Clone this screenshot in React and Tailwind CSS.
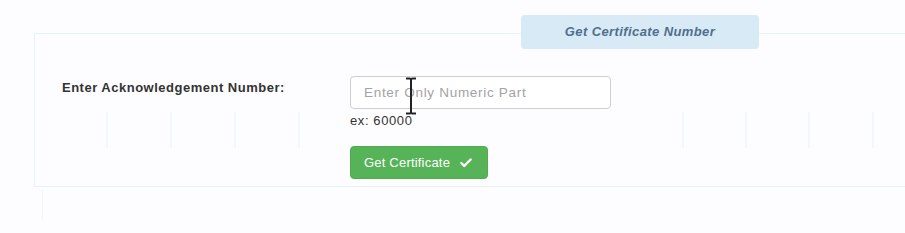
import React from 'react';
import { Check } from 'lucide-react';

// faint guide lines seen behind the form row
const GUIDE_LINES = [106, 170, 234, 298, 682, 745, 808, 872];

export default function App() {
  return (
    <div className="relative w-[905px] h-[233px] overflow-hidden bg-[#fdfdff] font-['Liberation_Sans',Arial,sans-serif] text-[#333]">
      {/* background guide lines */}
      <div className="absolute inset-x-0 top-[112px] h-[36px] pointer-events-none">
        {GUIDE_LINES.map((x) => (
          <div key={x} className="absolute top-0 h-full w-[2px] bg-[#f1f7fe]" style={{ left: x }} />
        ))}
      </div>

      <div className="relative pt-[33px] pl-[34px]">
        <div className="border border-r-0 border-[#e4f3f6] h-[154px]">
          {/* legend tab */}
          <div className="ml-[486px] -mt-[19px] w-[238px] h-[34px] rounded-[4px] bg-[#d9eaf7] flex items-center justify-center">
            <span className="text-[13px] tracking-[0.4px] font-bold italic text-[#4f6f8c]">Get Certificate Number</span>
          </div>

          <div className="flex mt-[27px] pl-[27px]">
            <label className="w-[288px] pt-[2px] text-[13px] tracking-[0.5px] font-bold text-[#333]">
              Enter Acknowledgement Number:
            </label>
            <div className="flex flex-col">
              <input
                type="text"
                placeholder="Enter Only Numeric Part"
                className="w-[261px] h-[33px] rounded-[4px] border border-[#cfcfcf] bg-white px-[13px] text-[13.5px] tracking-[0.7px] placeholder:text-[#a3a3a3] outline-none"
              />
              <span className="mt-[5px] text-[13px] tracking-[0.6px] leading-[14px] text-[#333]">ex: 60000</span>
              <button
                type="button"
                className="mt-[18px] w-[138px] h-[33px] rounded-[4px] border border-[#4cae4c] bg-[#56b357] flex items-center pl-[13px] gap-[9px] text-[13px] tracking-[0.2px] text-white"
              >
                Get Certificate
                <Check className="size-[14px]" strokeWidth={4} />
              </button>
            </div>
          </div>
        </div>
        <div className="ml-[8px] mt-[3px] h-[30px] border-l border-[#eef7fa]" />
      </div>

      {/* text cursor (I-beam) over the input */}
      <svg className="absolute left-[404px] top-[77px] pointer-events-none" width="14" height="38" viewBox="0 0 14 38">
        <path d="M2 1.5h3.5c.8 0 1.5.7 1.5 1.5 0-.8.7-1.5 1.5-1.5H12M7 3v32M2 36.5h3.5c.8 0 1.5-.7 1.5-1.5 0 .8.7 1.5 1.5 1.5H12" fill="none" stroke="#222" strokeWidth="2" />
      </svg>
    </div>
  );
}
